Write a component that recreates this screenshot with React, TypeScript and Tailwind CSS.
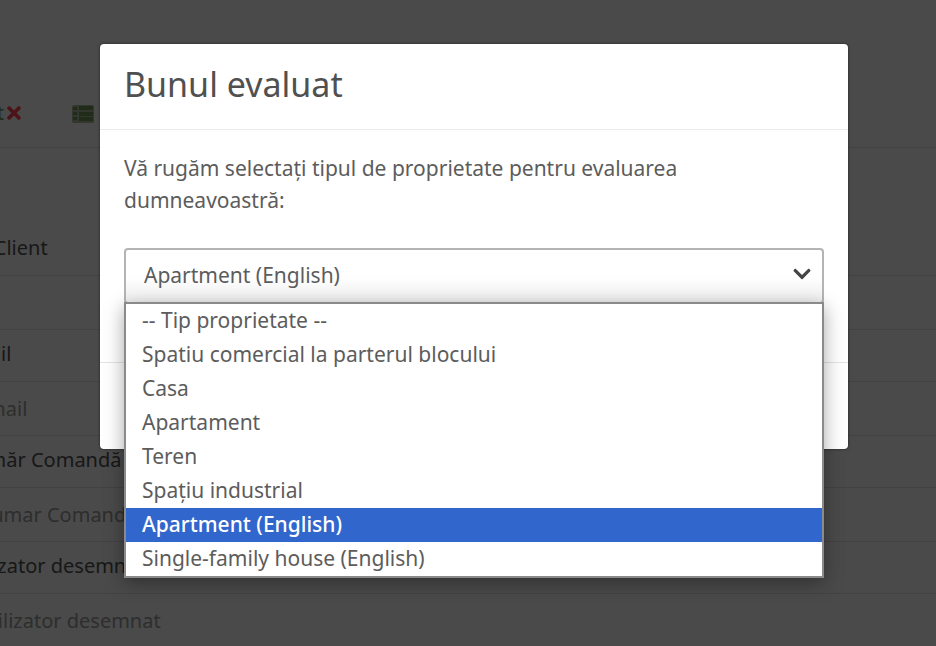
import React, { useState } from 'react'
import { FaTimes, FaChevronDown } from 'react-icons/fa'

const options = [
  '-- Tip proprietate --',
  'Spatiu comercial la parterul blocului',
  'Casa',
  'Apartament',
  'Teren',
  'Spațiu industrial',
  'Apartment (English)',
  'Single-family house (English)',
]

const fields = [
  { id: 'client', label: 'Tip Client', placeholder: '' },
  { id: 'email', label: 'Email', placeholder: 'Email' },
  { id: 'order', label: 'Număr Comandă', placeholder: 'Numar Comandă' },
  { id: 'user', label: 'Utilizator desemnat', placeholder: 'Utilizator desemnat' },
]

const ListIcon = () => (
  <svg viewBox="0 0 22 18" className="h-[18px] w-[22px] text-[#6f8f58]" fill="currentColor">
    <rect width="22" height="18" rx="2" opacity="0.6" />
    <path d="M1 2h4v3H1zM1 7h4v3H1zM1 12h4v3H1zM7 1h14v4H7zM7 7h14v4H7zM7 12h14v4H7z" />
  </svg>
)

// order form that stays behind the dialog
const OrderForm = () => {
  return (
    <form className="-ml-10 bg-[#f7f7f7] text-xl text-[#505050]">
      <div className="flex h-[148px] items-end gap-12 border-b border-[#dcdcdc] pb-6">
        <button type="button" className="flex h-5 items-center">
          <span className="flex w-11 justify-end text-[#6f8f58]">Raport</span>
          <FaTimes size={20} className="text-[#ff4050]" />
        </button>
        <button type="button" aria-label="Listă" className="flex items-center">
          <ListIcon />
        </button>
      </div>
      <div className="pt-[76px]">
        {fields.map((field) => (
          <div key={field.id}>
            <label htmlFor={field.id} className="flex h-[52px] items-center border-b border-[#dcdcdc] pb-1">
              {field.label}
            </label>
            <input
              id={field.id}
              placeholder={field.placeholder}
              className="block h-[54px] w-full border-b border-[#dcdcdc] pl-4 placeholder:text-[#999999]"
            />
          </div>
        ))}
      </div>
    </form>
  )
}

const App = () => {
  const [selected, setSelected] = useState('Apartment (English)')

  return (
    <div className="relative h-screen overflow-hidden bg-[#f7f7f7] font-['Noto_Sans',sans-serif]">
      <OrderForm />
      <div className="absolute inset-0 bg-black/70 pl-3 pt-11">
        <div role="dialog" aria-labelledby="title" className="mx-auto max-w-[748px] rounded bg-white text-[#5c5c5c] shadow-[0_0_3px_#222222]">
          <div className="border-b border-[#ebebeb] px-6 pt-[18px] pb-[23px]">
            <h1 id="title" className="text-[34px] leading-[44px] text-[#505050]">Bunul evaluat</h1>
          </div>
          <div className="px-6 pt-[22px] pb-[58px]">
            <label htmlFor="type" className="block max-w-[600px] text-[21px] leading-8">
              Vă rugăm selectați tipul de proprietate pentru evaluarea dumneavoastră:
            </label>
            <div className="relative mt-8 text-[21px]">
              <select
                id="type"
                value={selected}
                onChange={(e) => setSelected(e.target.value)}
                className="block h-14 w-full appearance-none rounded border-2 border-[#b4b4b4] bg-linear-to-b from-white from-50% to-[#f0f0f0] px-[18px]"
              >
                {options.map((option) => (
                  <option key={option}>{option}</option>
                ))}
              </select>
              <FaChevronDown size={20} className="pointer-events-none absolute top-4 right-3 text-[#444444]" />
              {/* opened list */}
              <ul role="listbox" className="absolute top-[54px] w-full border-2 border-[#8a8a8a] bg-white shadow-[0_5px_18px_rgba(0,0,0,0.35)]">
                {options.map((option) => (
                  <li
                    key={option}
                    role="option"
                    aria-selected={option === selected}
                    onClick={() => setSelected(option)}
                    className="h-[34px] px-4 leading-8 aria-selected:bg-[#3166cc] aria-selected:font-medium aria-selected:text-white"
                  >
                    {option}
                  </li>
                ))}
              </ul>
            </div>
          </div>
          <div className="h-[87px] border-t border-[#e4e4e4]"></div>
        </div>
      </div>
    </div>
  )
}

export default App
